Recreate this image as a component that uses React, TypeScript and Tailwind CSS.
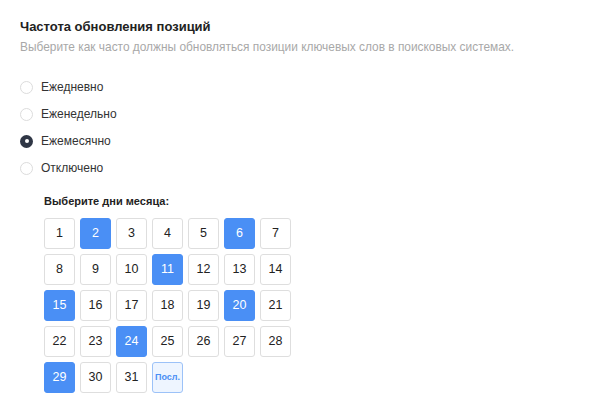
import { useState } from "react"

const options = ["Ежедневно", "Еженедельно", "Ежемесячно", "Отключено"]

export default function App() {
  const [mode, setMode] = useState("Ежемесячно")
  const [days, setDays] = useState<number[]>([2, 6, 11, 15, 20, 24, 29])

  const toggle = (d: number) =>
    setDays((prev) => (prev.includes(d) ? prev.filter((x) => x !== d) : [...prev, d]))

  return (
    <div className="min-h-screen bg-white px-5 pt-[19px] font-['Liberation_Sans',Arial,sans-serif]">
      <h2 className="text-[13px] font-bold leading-[16px] text-[#222]">Частота обновления позиций</h2>
      <p className="mt-[5px] text-[11.9px] leading-[14px] text-[#a8a8a8]">
        Выберите как часто должны обновляться позиции ключевых слов в поисковых системах.
      </p>

      <div className="mt-[25px] flex flex-col gap-[11px]">
        {options.map((o) => (
          <label key={o} className="flex h-4 cursor-pointer items-center gap-[8px]" onClick={() => setMode(o)}>
            <span
              className={
                o === mode
                  ? "flex h-[13px] w-[13px] items-center justify-center rounded-full bg-[#2f3645]"
                  : "h-[13px] w-[13px] rounded-full border border-[#dcdcdc] bg-white"
              }
            >
              {o === mode && <span className="h-[4px] w-[4px] rounded-full bg-white" />}
            </span>
            <span className="text-[12px] text-[#333]">{o}</span>
          </label>
        ))}
      </div>

      {mode === "Ежемесячно" && (
        <div className="mt-[18px] pl-6">
          <div className="text-[11px] font-bold leading-[14px] text-[#222]">Выберите дни месяца:</div>
          <div className="mt-[10px] grid w-max grid-cols-[repeat(7,31px)] gap-[5px]">
            {Array.from({ length: 31 }, (_, i) => i + 1).map((d) => {
              const on = days.includes(d)
              return (
                <button
                  key={d}
                  onClick={() => toggle(d)}
                  className={
                    on
                      ? "h-[31px] rounded-[3px] border border-[#4a8ff5] bg-[#4a8ff5] text-[12.5px] text-white"
                      : "h-[31px] rounded-[3px] border border-[#dedede] bg-white text-[12.5px] text-[#222]"
                  }
                >
                  {d}
                </button>
              )
            })}
            <button className="h-[31px] rounded-[3px] border border-[#9cc2f8] bg-[#eef5ff] text-[9px] font-bold text-[#4a8ff5]">
              Посл.
            </button>
          </div>
        </div>
      )}
    </div>
  )
}
